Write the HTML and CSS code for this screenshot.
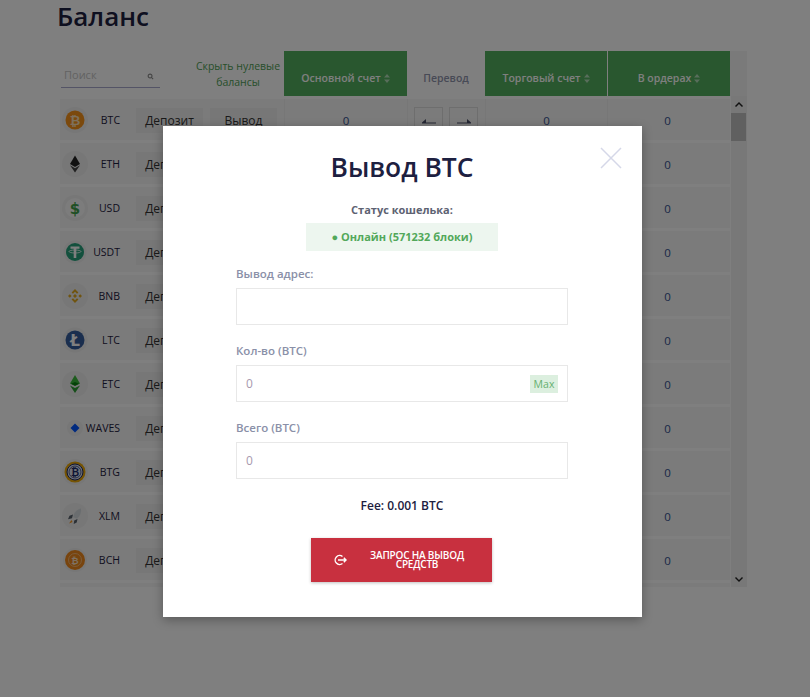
FILE: index.html
```html
<!DOCTYPE html>
<html lang="ru">
<head>
    <meta charset="UTF-8">
    <meta name="viewport" content="width=device-width, initial-scale=1.0">
    <title>Баланс</title>
    <link rel="stylesheet" href="styles.css">
</head>
<body>
    <div class="page">
        <h1 class="title">Баланс</h1>
        <div class="balances">
            <div class="table-wrap">
                <div class="table-head">
                    <div class="head-left">
                        <div class="search">
                            <span>Поиск</span>
                            <svg class="search-icon" viewBox="0 0 8 8"><circle cx="3.5" cy="3.5" r="2.2"/><path d="M5 5l2 2"/></svg>
                        </div>
                        <div class="hide-zero">Скрыть нулевые балансы</div>
                    </div>
                    <div class="th green">Основной счет <svg class="sort" viewBox="0 0 6 9"><path d="M3 0l3 3.6H0zM3 9L0 5.4h6z"/></svg></div>
                    <div class="th">Перевод</div>
                    <div class="th green">Торговый счет <svg class="sort" viewBox="0 0 6 9"><path d="M3 0l3 3.6H0zM3 9L0 5.4h6z"/></svg></div>
                    <div class="th green">В ордерах <svg class="sort" viewBox="0 0 6 9"><path d="M3 0l3 3.6H0zM3 9L0 5.4h6z"/></svg></div>
                </div>
                <div class="table-body">
                    <div class="rows">
                        <div class="row">
                            <div class="coin-cell">
                                <span class="coin"><svg viewBox="0 0 26 26"><circle cx="13" cy="13" r="13" fill="#eee"/><circle cx="13" cy="13" r="9.500" fill="#f7931a"/><text x="13" y="17.5" class="glyph" fill="#fde0b8" font-size="13">₿</text></svg></span>
                                <span class="ticker">BTC</span>
                                <span class="btn">Депозит</span>
                                <span class="btn">Вывод</span>
                            </div>
                            <div class="cell">0</div>
                            <div class="cell transfer">
                                <span class="arrow-btn"><svg viewBox="0 0 14 6"><path d="M0 4.5h14v1H0zM0 4.5L4 1v3.5z"/></svg></span>
                                <span class="arrow-btn"><svg viewBox="0 0 14 6"><path d="M0 4.5h14v1H0zM14 4.5L10 1v3.5z"/></svg></span>
                            </div>
                            <div class="cell">0</div>
                            <div class="cell last">0</div>
                        </div>
                        <div class="row">
                            <div class="coin-cell">
                                <span class="coin"><svg viewBox="0 0 26 26"><circle cx="13" cy="13" r="13" fill="#eee"/><path d="M13 4.500l5 8.500-5 3-5-3z" fill="#222"/><path d="M13 17.300l5-3-5 7.200-5-7.200z" fill="#444"/></svg></span>
                                <span class="ticker">ETH</span>
                                <span class="btn">Депозит</span>
                                <span class="btn">Вывод</span>
                            </div>
                            <div class="cell">0</div>
                            <div class="cell"></div>
                            <div class="cell">0</div>
                            <div class="cell last">0</div>
                        </div>
                        <div class="row">
                            <div class="coin-cell">
                                <span class="coin"><svg viewBox="0 0 26 26"><circle cx="13" cy="13" r="13" fill="#eee"/><circle cx="13" cy="13" r="10" fill="#f8f8f8"/><text x="13" y="18.5" class="glyph" fill="#3fa14a" font-size="15">$</text></svg></span>
                                <span class="ticker">USD</span>
                                <span class="btn">Депозит</span>
                                <span class="btn">Вывод</span>
                            </div>
                            <div class="cell">0</div>
                            <div class="cell"></div>
                            <div class="cell">0</div>
                            <div class="cell last">0</div>
                        </div>
                        <div class="row">
                            <div class="coin-cell">
                                <span class="coin"><svg viewBox="0 0 26 26"><circle cx="13" cy="13" r="11.500" fill="#eee"/><circle cx="13" cy="13" r="9" fill="#26a17b"/><path d="M8.500 7.500h9v2.200h-3.200V19h-2.600V9.700H8.500z" fill="#fff"/><ellipse cx="13" cy="12.500" rx="6" ry="1.500" fill="none" stroke="#fff" stroke-width=".8"/></svg></span>
                                <span class="ticker">USDT</span>
                                <span class="btn">Депозит</span>
                                <span class="btn">Вывод</span>
                            </div>
                            <div class="cell">0</div>
                            <div class="cell"></div>
                            <div class="cell">0</div>
                            <div class="cell last">0</div>
                        </div>
                        <div class="row">
                            <div class="coin-cell">
                                <span class="coin"><svg viewBox="0 0 26 26"><circle cx="13" cy="13" r="13" fill="#eee"/><path d="M13 6l3.400 3.400-1.400 1.400-2-2-2 2-1.400-1.400zM13 20l-3.400-3.400 1.400-1.400 2 2 2-2 1.400 1.400zM6 13l1.800-1.800L9.600 13l-1.800 1.800zM16.400 13l1.800-1.800L20 13l-1.800 1.800zM13 11l2 2-2 2-2-2z" fill="#e0a81f"/></svg></span>
                                <span class="ticker">BNB</span>
                                <span class="btn">Депозит</span>
                                <span class="btn">Вывод</span>
                            </div>
                            <div class="cell">0</div>
                            <div class="cell"></div>
                            <div class="cell">0</div>
                            <div class="cell last">0</div>
                        </div>
                        <div class="row">
                            <div class="coin-cell">
                                <span class="coin"><svg viewBox="0 0 26 26"><circle cx="13" cy="13" r="12.500" fill="#eee"/><circle cx="13" cy="13" r="9.500" fill="#345d9d"/><text x="13" y="18.500" class="glyph" fill="#fff" font-size="15">Ł</text></svg></span>
                                <span class="ticker">LTC</span>
                                <span class="btn">Депозит</span>
                                <span class="btn">Вывод</span>
                            </div>
                            <div class="cell">0</div>
                            <div class="cell"></div>
                            <div class="cell">0</div>
                            <div class="cell last">0</div>
                        </div>
                        <div class="row">
                            <div class="coin-cell">
                                <span class="coin"><svg viewBox="0 0 26 26"><circle cx="13" cy="13" r="13" fill="#eee"/><path d="M13 4l5 8.500L13 15l-5-2.500z" fill="#3ab83a"/><path d="M13 22l5-7.500L13 17l-5-2.500z" fill="#2f9e35"/><path d="M9 12.800l4-1.800 4 1.800-4 1.900z" fill="#0b8311"/></svg></span>
                                <span class="ticker">ETC</span>
                                <span class="btn">Депозит</span>
                                <span class="btn">Вывод</span>
                            </div>
                            <div class="cell">0</div>
                            <div class="cell"></div>
                            <div class="cell">0</div>
                            <div class="cell last">0</div>
                        </div>
                        <div class="row">
                            <div class="coin-cell">
                                <span class="coin"><svg viewBox="0 0 26 26"><circle cx="13" cy="13" r="8" fill="#eee"/><path d="M13 8.500l4.500 4.500-4.500 4.500L8.500 13z" fill="#0055ff"/></svg></span>
                                <span class="ticker">WAVES</span>
                                <span class="btn">Депозит</span>
                                <span class="btn">Вывод</span>
                            </div>
                            <div class="cell">0</div>
                            <div class="cell"></div>
                            <div class="cell">0</div>
                            <div class="cell last">0</div>
                        </div>
                        <div class="row">
                            <div class="coin-cell">
                                <span class="coin"><svg viewBox="0 0 26 26"><circle cx="13" cy="13" r="13" fill="#eee"/><circle cx="13" cy="13" r="10.500" fill="#eba809"/><circle cx="13" cy="13" r="8" fill="#dfe3ee" stroke="#1b2a6b" stroke-width="1"/><circle cx="13" cy="13" r="6" fill="none" stroke="#1b2a6b" stroke-width=".7"/><text x="13" y="17" class="glyph" fill="#1b2a6b" font-size="10">₿</text></svg></span>
                                <span class="ticker">BTG</span>
                                <span class="btn">Депозит</span>
                                <span class="btn">Вывод</span>
                            </div>
                            <div class="cell">0</div>
                            <div class="cell"></div>
                            <div class="cell">0</div>
                            <div class="cell last">0</div>
                        </div>
                        <div class="row">
                            <div class="coin-cell">
                                <span class="coin"><svg viewBox="0 0 26 26"><circle cx="13" cy="13" r="13" fill="#eee"/><path d="M19 5.500c.5 4-.7 7.200-4 10.200l-3.700-1.500C11.500 10 14.500 6.500 19 5.500z" fill="#d5dbdf"/><path d="M11 11.500l-3.500 1.200-1.500 3.500 4-1zM15.500 16l-.8 3.500-3 1.500.5-3.500z" fill="#56606b"/><path d="M9.500 17L7 20.500l3.500-1.500z" fill="#f7931a"/></svg></span>
                                <span class="ticker">XLM</span>
                                <span class="btn">Депозит</span>
                                <span class="btn">Вывод</span>
                            </div>
                            <div class="cell">0</div>
                            <div class="cell"></div>
                            <div class="cell">0</div>
                            <div class="cell last">0</div>
                        </div>
                        <div class="row">
                            <div class="coin-cell">
                                <span class="coin"><svg viewBox="0 0 26 26"><circle cx="13" cy="13" r="12" fill="#eee"/><circle cx="13" cy="13" r="10" fill="#f0891c"/><circle cx="13" cy="13" r="6.500" fill="none" stroke="#f9c48c" stroke-width=".8"/><text x="13" y="16.500" class="glyph" fill="#fde3c6" font-size="9">₿</text></svg></span>
                                <span class="ticker">BCH</span>
                                <span class="btn">Депозит</span>
                                <span class="btn">Вывод</span>
                            </div>
                            <div class="cell">0</div>
                            <div class="cell"></div>
                            <div class="cell">0</div>
                            <div class="cell last">0</div>
                        </div>
                        <div class="row"></div>
                    </div>
                    <div class="scrollbar">
                        <svg class="scroll-arrow" viewBox="0 0 8 5"><path d="M0 4l4-4 4 4-1 1-3-3-3 3z"/></svg>
                        <div class="scroll-thumb"></div>
                        <svg class="scroll-arrow bottom" viewBox="0 0 8 5"><path d="M0 1l4 4 4-4-1-1-3 3-3-3z"/></svg>
                    </div>
                </div>
            </div>
        </div>
    </div>

    <div class="overlay">
        <div class="modal">
            <svg class="close" viewBox="0 0 22 22"><path d="M1 1l20 20M21 1L1 21"/></svg>
            <h2 class="modal-title">Вывод BTC</h2>
            <div class="status-label">Статус кошелька:</div>
            <div class="status-box">● Онлайн (571232 блоки)</div>
            <div class="form">
                <div class="form-group">
                    <label>Вывод адрес:</label>
                    <div class="input"></div>
                </div>
                <div class="form-group">
                    <label>Кол-во (BTC)</label>
                    <div class="input">0<span class="max">Max</span></div>
                </div>
                <div class="form-group">
                    <label>Всего (BTC)</label>
                    <div class="input">0</div>
                </div>
            </div>
            <div class="fee">Fee: 0.001 BTC</div>
            <div class="submit">
                <svg class="submit-icon" viewBox="0 0 14 12"><path d="M9.500 2.500A4.500 4.500 0 1 0 9.500 9.500"/><path d="M5 6h8M10.800 3.800L13 6l-2.200 2.200"/></svg>
                <span class="submit-text">Запрос на вывод средств</span>
            </div>
        </div>
    </div>
</body>
</html>
```

FILE: styles.css
```css
body {
    font-family: "Open Sans", "Noto Sans", sans-serif;
    margin: 0;
    padding: 0;
    background-color: #fff;
    color: #1d2040;
    height: 697px;
    overflow: hidden;
}
.page {
    padding-left: 57px;
}
.title {
    margin: 0;
    font-size: 26px;
    line-height: 33px;
    font-weight: 600;
    height: 51px;
}
.balances {
    margin-left: 3px;
    width: 687px;
}
.table-head {
    display: grid;
    grid-template-columns: 224px 123px 78px 122px 123px 17px;
    grid-template-rows: 45px;
    height: 45px;
    background: linear-gradient(to right, #fff 670px, #f5f5f5 670px);
}
.head-left {
    display: flex;
    align-items: flex-end;
}
.search {
    width: 99px;
    height: 25px;
    margin-left: 1px;
    margin-bottom: 8px;
    border-bottom: 1px solid #a9a9cc;
    box-sizing: border-box;
    font-size: 11px;
    line-height: 22px;
    color: #c5c5c5;
    padding-left: 3px;
    display: flex;
    justify-content: space-between;
    align-items: center;
}
.search-icon {
    width: 7px;
    height: 7px;
    margin-right: 6px;
    margin-top: 3px;
    fill: none;
    stroke: #888;
    stroke-width: 1.2;
}
.hide-zero {
    width: 92px;
    margin-left: 32px;
    margin-bottom: 6px;
    font-size: 10.5px;
    line-height: 16px;
    text-align: center;
    color: #4f9e55;
}
.th {
    display: flex;
    align-items: flex-end;
    justify-content: center;
    gap: 3px;
    padding-bottom: 10px;
    box-sizing: border-box;
    font-size: 10.5px;
    line-height: 16px;
    font-weight: 600;
    color: #8f94ac;
}
.th.green {
    background-color: #52ae5e;
    color: #fff;
}
.th.green + .th.green {
    border-left: 1px solid #fff;
}
.sort {
    width: 6px;
    height: 9px;
    margin-bottom: 3px;
    fill: rgba(255, 255, 255, .55);
}
.table-body {
    display: flex;
    height: 491px;
    overflow: hidden;
}
.rows {
    width: 670px;
    padding-top: 3px;
}
.row {
    display: grid;
    grid-template-columns: 224px 123px 78px 122px 123px;
    height: 41px;
    margin-bottom: 3px;
    background-color: #f6f6f6;
}
.coin-cell {
    display: flex;
    align-items: center;
    padding-top: 1px;
    box-sizing: border-box;
}
.coin {
    width: 26px;
    height: 26px;
    margin-left: 2px;
    margin-right: -4px;
    flex: none;
}
.coin svg {
    display: block;
    width: 26px;
    height: 26px;
}
.glyph {
    font-family: "DejaVu Sans", sans-serif;
    font-weight: 700;
    text-anchor: middle;
}
.ticker {
    width: 36px;
    text-align: right;
    font-size: 10.5px;
}
.btn {
    width: 67px;
    height: 25px;
    margin-left: 16px;
    background-color: #eee;
    font-size: 12px;
    line-height: 25px;
    text-align: center;
    color: #333;
    flex: none;
}
.btn + .btn {
    margin-left: 7px;
}
.cell {
    display: flex;
    align-items: center;
    justify-content: center;
    border-left: 1px solid #eee;
    font-size: 11.5px;
    color: #35508f;
    padding-top: 2px;
    box-sizing: border-box;
}
.cell.last {
    padding-right: 3px;
}
.transfer {
    gap: 6px;
    align-items: flex-start;
    padding: 8px 1px 0 0;
}
.arrow-btn {
    width: 29px;
    height: 28px;
    border: 1px solid #ddd;
    box-sizing: border-box;
    display: flex;
    align-items: center;
    justify-content: center;
}
.arrow-btn svg {
    width: 14px;
    height: 6px;
    fill: #4a4f68;
}
.scrollbar {
    position: relative;
    width: 16px;
    height: 491px;
    margin-left: 1px;
    background-color: #f1f1f1;
}
.scroll-arrow {
    display: block;
    width: 8px;
    height: 5px;
    margin: 6px auto 0;
    fill: #222;
}
.scroll-arrow.bottom {
    position: absolute;
    left: 4px;
    bottom: 5px;
    margin: 0;
}
.scroll-thumb {
    height: 28px;
    margin: 6px 1px 0 0;
    background-color: #c1c1c1;
}
.overlay {
    position: absolute;
    top: 0;
    left: 0;
    right: 0;
    bottom: 0;
    background-color: rgba(0, 0, 0, .5);
    display: flex;
    justify-content: center;
    align-items: flex-start;
}
.modal {
    position: relative;
    width: 479px;
    height: 491px;
    margin-top: 126px;
    margin-left: -5px;
    background-color: #fff;
    box-shadow: 0 3px 10px rgba(0, 0, 0, .3);
    display: flex;
    flex-direction: column;
    align-items: center;
    box-sizing: border-box;
    padding: 23px 1px 0 0;
}
.close {
    position: absolute;
    top: 21px;
    right: 20px;
    width: 22px;
    height: 22px;
    fill: none;
    stroke: #d5d8e8;
    stroke-width: 1.5;
}
.modal-title {
    margin: 0;
    font-size: 26.4px;
    line-height: 36px;
    font-weight: 600;
}
.status-label {
    margin-top: 16px;
    font-size: 11px;
    line-height: 18px;
    font-weight: 700;
    color: #5d6272;
}
.status-box {
    width: 192px;
    height: 28px;
    margin-top: 4px;
    background-color: #edf6ef;
    font-size: 11px;
    line-height: 28px;
    font-weight: 700;
    color: #52a85a;
    text-align: center;
}
.form {
    width: 332px;
    margin-top: 14px;
}
.form-group {
    margin-bottom: 17px;
}
.form-group label {
    display: block;
    font-size: 11.5px;
    line-height: 18px;
    font-weight: 600;
    color: #8a90a8;
    margin-bottom: 5px;
}
.input {
    height: 37px;
    border: 1px solid #e8e8e8;
    box-sizing: border-box;
    padding: 0 9px;
    display: flex;
    align-items: center;
    justify-content: space-between;
    font-size: 12px;
    color: #a898ae;
}
.max {
    width: 28px;
    height: 18px;
    background-color: #dcefdf;
    font-size: 10.5px;
    line-height: 18px;
    text-align: center;
    color: #66b070;
}
.fee {
    margin-top: 1px;
    font-size: 12px;
    line-height: 18px;
    font-weight: 600;
    color: #1d2040;
}
.submit {
    width: 181px;
    height: 44px;
    margin-top: 23px;
    margin-left: -1px;
    background-color: #c8303f;
    box-shadow: 0 1px 3px rgba(0, 0, 0, .25);
    display: flex;
    align-items: center;
}
.submit-icon {
    width: 14px;
    height: 12px;
    margin-left: 22px;
    fill: none;
    stroke: #fff;
    stroke-width: 1.4;
    flex: none;
}
.submit-text {
    width: 110px;
    margin-left: 15px;
    font-size: 10px;
    letter-spacing: -.2px;
    line-height: 9px;
    font-weight: 600;
    text-transform: uppercase;
    text-align: center;
    color: #fff;
}
```
